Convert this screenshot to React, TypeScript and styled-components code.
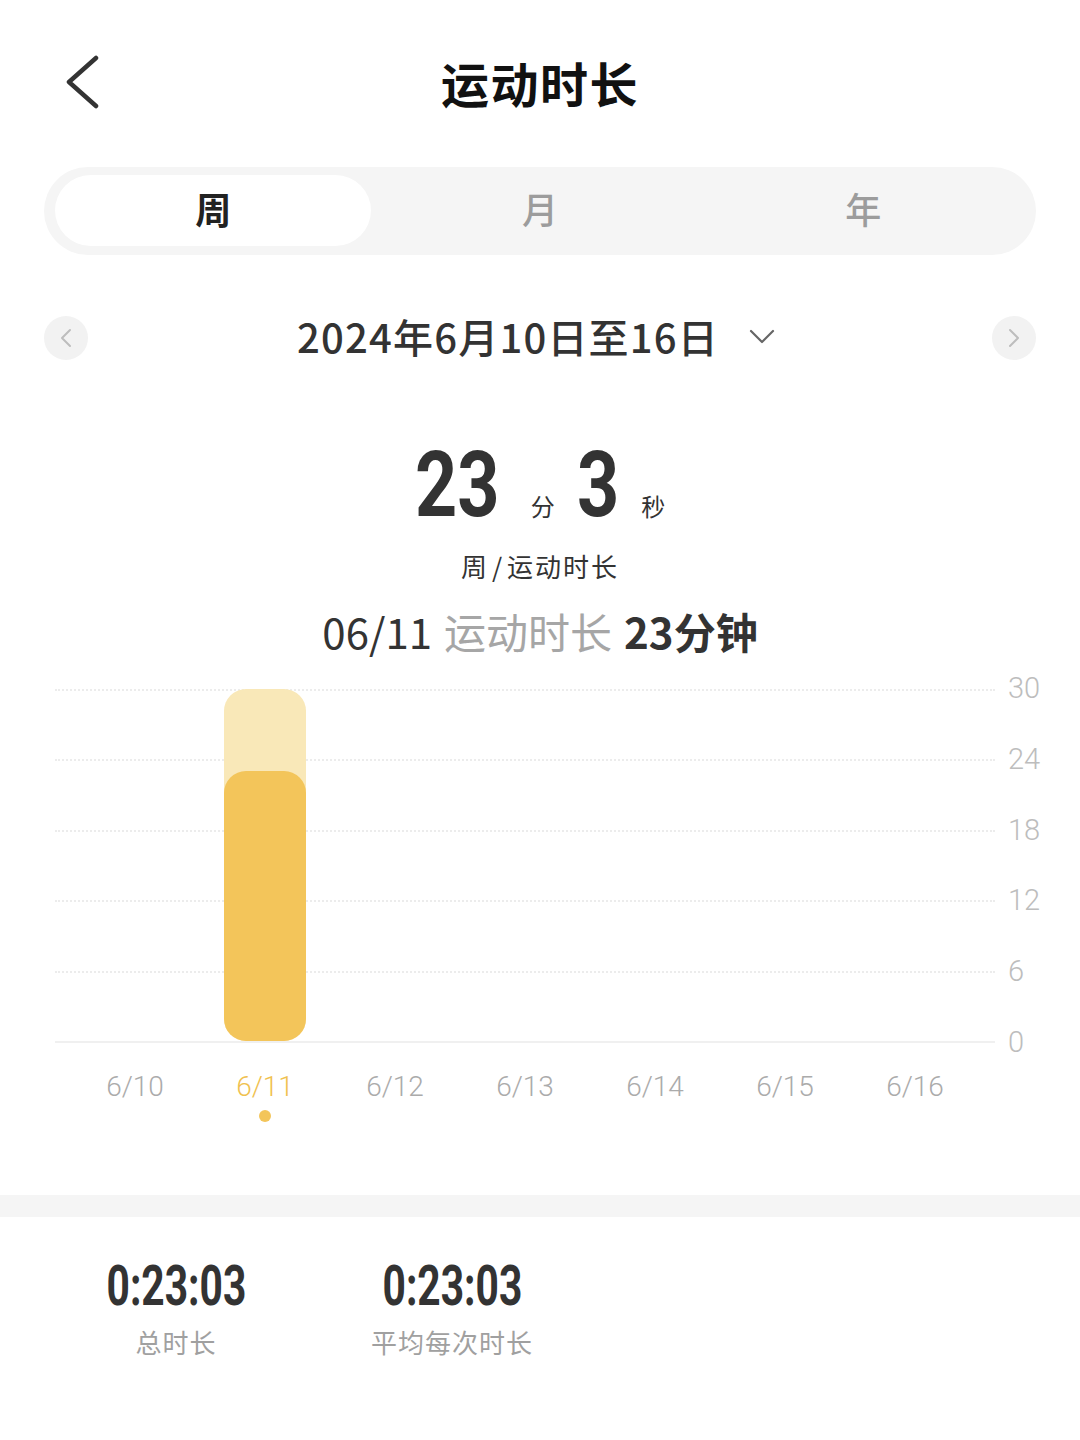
import React from 'react';
import styled, { createGlobalStyle } from 'styled-components';

const GlobalStyle = createGlobalStyle`
  html, body { margin: 0; padding: 0; background: #fff; }
  body { font-family: "Noto Sans CJK SC", "Noto Sans", sans-serif; color: #333; }
  * { box-sizing: border-box; }
`;

const NUM_FONT = `Roboto, "Noto Sans CJK SC", sans-serif`;

const Page = styled.div`
  width: 1080px;
  min-height: 1440px;
  background: #fff;
  display: flex;
  flex-direction: column;
`;

const Header = styled.header`
  height: 167px;
  padding-bottom: 4px;
  display: grid;
  grid-template-columns: 1fr auto 1fr;
  align-items: center;
`;

const BackButton = styled.button`
  justify-self: start;
  margin-left: 62px;
  width: 40px;
  height: 56px;
  border: none;
  background: none;
  padding: 0;
  display: flex;
  align-items: center;
  justify-content: center;
`;

const Title = styled.h1`
  margin: 0;
  font-size: 48px;
  line-height: 60px;
  font-weight: 700;
  color: #111;
  letter-spacing: 1.5px;
`;

const Segmented = styled.div`
  margin: 0 44px;
  height: 88px;
  border-radius: 44px;
  background: #f5f5f5;
  padding: 8px 11px 9px;
  display: grid;
  grid-template-columns: repeat(3, 1fr);
`;

const Segment = styled.div<{ $active?: boolean }>`
  border-radius: 36px;
  background: ${(p) => (p.$active ? '#fff' : 'transparent')};
  display: flex;
  align-items: center;
  justify-content: center;
  padding-bottom: 5px;
  font-size: 36px;
  font-weight: ${(p) => (p.$active ? 700 : 500)};
  color: ${(p) => (p.$active ? '#222' : '#9c9c9c')};
  margin-right: ${(p) => (p.$active ? '7px' : '0')};
`;

const DateRow = styled.div`
  margin: 61px 44px 0;
  height: 44px;
  display: flex;
  align-items: center;
  justify-content: space-between;
`;

const CircleButton = styled.button`
  width: 44px;
  height: 44px;
  border-radius: 50%;
  border: none;
  padding: 0;
  background: #f2f2f2;
  display: flex;
  align-items: center;
  justify-content: center;
`;

const DateLabel = styled.div`
  display: flex;
  align-items: center;
  gap: 30px;
  margin-right: 8px;
  font-size: 40px;
  line-height: 50px;
  font-weight: 500;
  color: #333;
  letter-spacing: 1.2px;
  padding-bottom: 5px;
`;

const Summary = styled.section`
  display: flex;
  flex-direction: column;
  align-items: center;
`;

const BigRow = styled.div`
  margin-top: 80px;
  display: flex;
  align-items: baseline;
  justify-content: center;
  line-height: 91px;
  height: 91px;
`;

const BigNum = styled.span<{ $n: number }>`
  display: inline-block;
  font-family: ${NUM_FONT};
  font-size: 91px;
  font-weight: 700;
  color: #333;
  transform: scaleX(0.81);
  margin: 0 ${(p) => -p.$n * 0.0534}em;
`;

const Unit = styled.span<{ $ml: number; $mr?: number }>`
  font-size: 24px;
  color: #333;
  margin-left: ${(p) => p.$ml}px;
  margin-right: ${(p) => p.$mr ?? 0}px;
`;

const SubLabel = styled.div`
  margin-top: 17px;
  font-size: 26px;
  line-height: 36px;
  color: #333;
  letter-spacing: 2px;
`;

const Slash = styled.span`
  margin: 0 3px;
`;

const DayLine = styled.div`
  margin-top: 19px;
  font-size: 42px;
  line-height: 56px;
  color: #333;
  display: flex;
  gap: 12px;
`;

const Muted = styled.span`
  color: #a6a6a6;
`;

const Strong = styled.span`
  font-weight: 700;
  color: #333;
`;

const ChartSection = styled.section`
  margin-top: 30px;
  display: flex;
  padding-left: 55px;
`;

const PlotColumn = styled.div`
  width: 940px;
  display: flex;
  flex-direction: column;
`;

const Plot = styled.div`
  display: grid;
  height: 354px;
  & > * {
    grid-area: 1 / 1;
  }
`;

const GridLayer = styled.div`
  display: flex;
  flex-direction: column;
  border-bottom: 2px solid #f0f0f0;
`;

const GridBand = styled.div`
  flex: 1;
  border-top: 2px dotted #ececec;
`;

const Columns = styled.div`
  display: grid;
  grid-template-columns: repeat(7, 130px);
  padding: 0 15px 2px;
`;

const BarSlot = styled.div`
  display: flex;
  align-items: flex-end;
  justify-content: center;
`;

const BarTrack = styled.div`
  width: 82px;
  border-radius: 22px;
  background: #f9e8b8;
  display: flex;
  flex-direction: column;
  justify-content: flex-end;
`;

const BarFill = styled.div`
  width: 100%;
  border-radius: 22px;
  background: #f3c55a;
`;

const XLabels = styled.div`
  display: grid;
  grid-template-columns: repeat(7, 130px);
  padding: 0 15px;
  margin-top: 29px;
`;

const XItem = styled.div`
  display: flex;
  flex-direction: column;
  align-items: center;
`;

const XLabel = styled.span<{ $active?: boolean }>`
  font-family: ${NUM_FONT};
  font-size: 28px;
  line-height: 30px;
  font-weight: 300;
  color: ${(p) => (p.$active ? '#f0c14f' : '#ababab')};
`;

const Dot = styled.span<{ $show?: boolean }>`
  margin-top: 8px;
  width: 12px;
  height: 12px;
  border-radius: 50%;
  background: ${(p) => (p.$show ? '#f3c55a' : 'transparent')};
`;

const YAxis = styled.div`
  height: 384px;
  margin-top: -16px;
  padding-left: 13px;
  display: flex;
  flex-direction: column;
  justify-content: space-between;
`;

const YLabel = styled.span`
  font-family: ${NUM_FONT};
  font-size: 29px;
  line-height: 30px;
  font-weight: 300;
  color: #bdbdbd;
`;

const Band = styled.div`
  margin-top: 73px;
  height: 22px;
  background: #f5f5f5;
`;

const Stats = styled.section`
  padding: 39px 0 0 38px;
  display: flex;
`;

const Stat = styled.div`
  width: 276px;
  display: flex;
  flex-direction: column;
  align-items: center;
`;

const StatValue = styled.span`
  display: inline-block;
  font-family: ${NUM_FONT};
  font-size: 55px;
  line-height: 60px;
  font-weight: 700;
  color: #333;
  transform: scaleX(0.74);
`;

const StatLabel = styled.span`
  margin-top: 8px;
  font-size: 26px;
  line-height: 36px;
  color: #a0a0a0;
  letter-spacing: 1px;
`;

const days = ['6/10', '6/11', '6/12', '6/13', '6/14', '6/15', '6/16'];
const values = [0, 23, 0, 0, 0, 0, 0];
const MAX = 30;
const PLOT_H = 352;

export default function App() {
  return (
    <Page>
      <GlobalStyle />
      <Header>
        <BackButton aria-label="返回">
          <svg width="34" height="54" viewBox="0 0 34 54" fill="none">
            <path d="M31 3 L4 27 L31 51" stroke="#333" strokeWidth="4.5" strokeLinecap="round" strokeLinejoin="round" />
          </svg>
        </BackButton>
        <Title>运动时长</Title>
        <span />
      </Header>

      <Segmented>
        <Segment $active>周</Segment>
        <Segment>月</Segment>
        <Segment>年</Segment>
      </Segmented>

      <DateRow>
        <CircleButton aria-label="上一周">
          <svg width="14" height="22" viewBox="0 0 14 22" fill="none">
            <path d="M11 3 L3 11 L11 19" stroke="#bdbdbd" strokeWidth="2" strokeLinecap="round" strokeLinejoin="round" />
          </svg>
        </CircleButton>
        <DateLabel>
          <span>2024年6月10日至16日</span>
          <svg width="26" height="16" viewBox="0 0 26 16" fill="none">
            <path d="M2 3 L13 14 L24 3" stroke="#666" strokeWidth="2.2" strokeLinecap="round" strokeLinejoin="round" />
          </svg>
        </DateLabel>
        <CircleButton aria-label="下一周">
          <svg width="14" height="22" viewBox="0 0 14 22" fill="none">
            <path d="M3 3 L11 11 L3 19" stroke="#bdbdbd" strokeWidth="2" strokeLinecap="round" strokeLinejoin="round" />
          </svg>
        </CircleButton>
      </DateRow>

      <Summary>
        <BigRow>
          <BigNum $n={2}>23</BigNum>
          <Unit $ml={31} $mr={22}>分</Unit>
          <BigNum $n={1}>3</BigNum>
          <Unit $ml={22}>秒</Unit>
        </BigRow>
        <SubLabel>
          周<Slash>/</Slash>运动时长
        </SubLabel>
        <DayLine>
          <span>06/11</span>
          <Muted>运动时长</Muted>
          <Strong>23分钟</Strong>
        </DayLine>
      </Summary>

      <ChartSection>
        <PlotColumn>
          <Plot>
            <GridLayer>
              {[0, 1, 2, 3, 4].map((i) => (
                <GridBand key={i} />
              ))}
            </GridLayer>
            <Columns>
              {values.map((v, i) => (
                <BarSlot key={days[i]}>
                  {v > 0 && (
                    <BarTrack style={{ height: PLOT_H }}>
                      <BarFill style={{ height: Math.round((v / MAX) * PLOT_H) }} />
                    </BarTrack>
                  )}
                </BarSlot>
              ))}
            </Columns>
          </Plot>
          <XLabels>
            {days.map((d, i) => (
              <XItem key={d}>
                <XLabel $active={i === 1}>{d}</XLabel>
                <Dot $show={i === 1} />
              </XItem>
            ))}
          </XLabels>
        </PlotColumn>
        <YAxis>
          {['30', '24', '18', '12', '6', '0'].map((l) => (
            <YLabel key={l}>{l}</YLabel>
          ))}
        </YAxis>
      </ChartSection>

      <Band />

      <Stats>
        <Stat>
          <StatValue>0:23:03</StatValue>
          <StatLabel>总时长</StatLabel>
        </Stat>
        <Stat>
          <StatValue>0:23:03</StatValue>
          <StatLabel>平均每次时长</StatLabel>
        </Stat>
      </Stats>
    </Page>
  );
}
